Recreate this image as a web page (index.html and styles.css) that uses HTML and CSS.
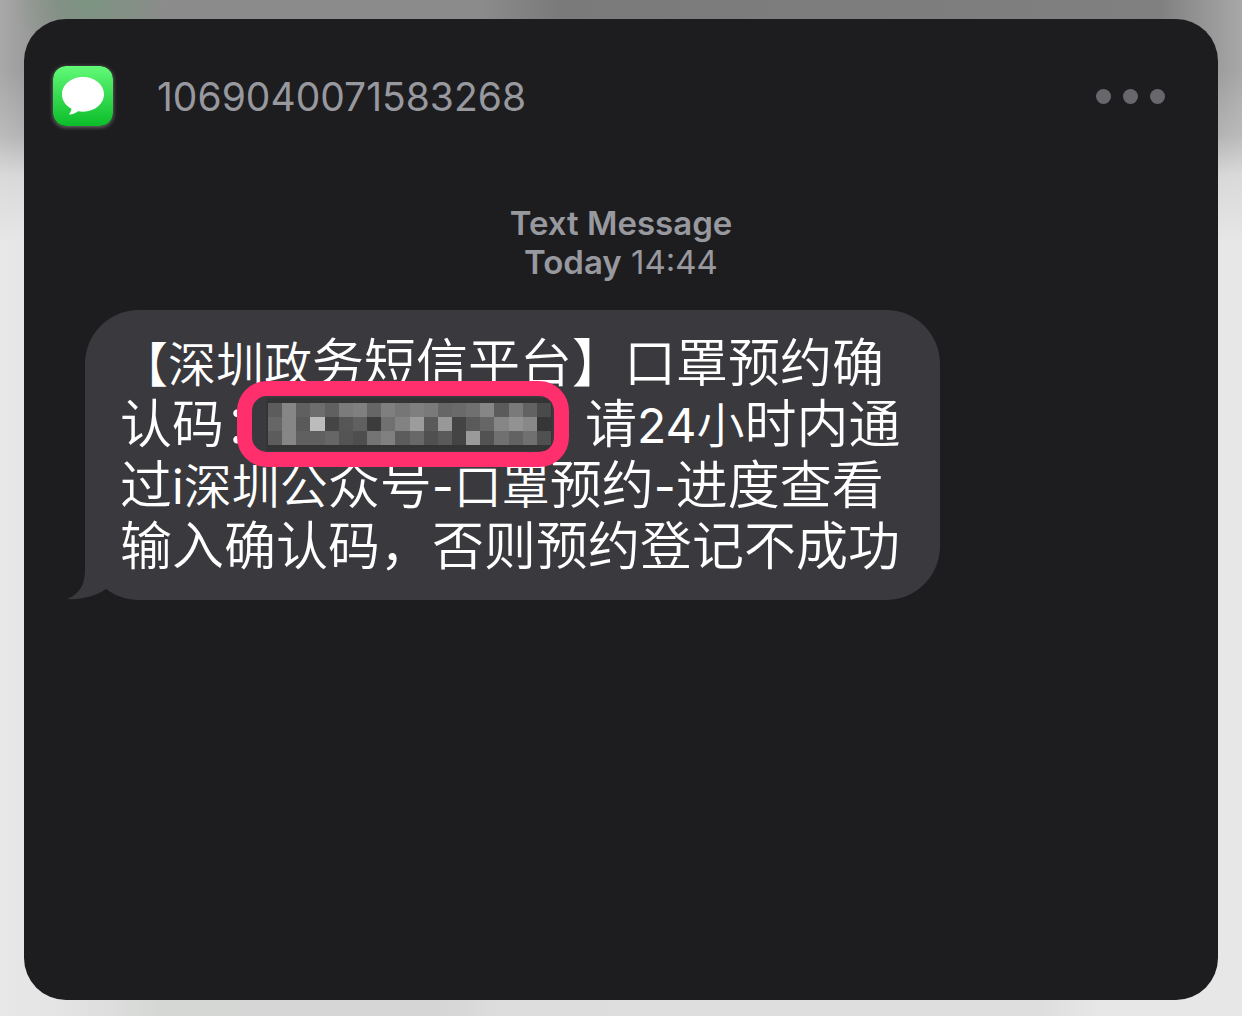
FILE: index.html
```html
<!DOCTYPE html>
<html lang="zh-CN">
<head>
<meta charset="utf-8">
<meta name="viewport" content="width=device-width, initial-scale=1">
<title>Messages</title>
<link rel="stylesheet" href="styles.css">
</head>
<body>
<main class="card">
  <header class="card-header">
    <svg class="app-icon" viewBox="0 0 60 60" aria-hidden="true">
      <defs>
        <linearGradient id="green" x1="0" y1="0" x2="0" y2="1">
          <stop offset="0" stop-color="#62fa78"/>
          <stop offset="1" stop-color="#0bbd29"/>
        </linearGradient>
      </defs>
      <rect width="60" height="60" rx="13" fill="url(#green)"/>
      <path d="M30 11C18.400 11 9 18.700 9 28.300C9 34.400 12.700 39.700 18.500 42.800C18.300 45 17.200 46.900 15.800 48.400C19.300 48.600 22.800 47.100 25 45.200C26.600 45.500 28.300 45.700 30 45.700C41.600 45.700 51 37.900 51 28.300C51 18.700 41.600 11 30 11Z" fill="#fff"/>
    </svg>
    <h1 class="sender">1069040071583268</h1>
    <button class="more" type="button" aria-label="More">
      <span class="dot"></span><span class="dot"></span><span class="dot"></span>
    </button>
  </header>
  <section class="thread">
    <p class="stamp"><b>Text Message</b><br><b>Today</b> <time>14:44</time></p>
    <div class="bubble">
      <svg class="tail" viewBox="0 0 50 60" aria-hidden="true">
        <path d="M18 0V30C18 44 13 54 0 59C14 60 29 56 39 49L50 40V0Z" fill="#3a393d"/>
      </svg>
      <p class="message"><span class="alt">【深圳政</span>务短信平台】口罩预约确<br>认码：<span class="redacted"><svg class="mosaic" viewBox="0 0 302 56" aria-hidden="true"></svg></span>请<span class="latin">24</span><span class="alt">小</span>时内通<br>过<span class="latin">i</span><span class="alt">深圳公</span>众号<span class="latin">-</span><span class="alt">口罩</span>预约<span class="latin">-</span>进度查看<br>输入确认码，否则预约登记不成功</p>
    </div>
  </section>
</main>
<script src="mosaic.js"></script>
</body>
</html>
```
FILE: styles.css
```css
* {
  box-sizing: border-box;
}

body {
  margin: 0;
  min-height: 100vh;
  display: flex;
  padding: 19px 24px 16px;
  font-family: Inter, "Noto Sans CJK SC", sans-serif;
  background:
    radial-gradient(ellipse 80px 60px at 90px 0, rgba(120, 150, 125, 0.8), transparent),
    linear-gradient(to bottom, transparent 70px, rgba(230, 230, 230, 0.3) 135px, rgba(230, 230, 230, 0.8) 175px, #e6e6e6 240px) top / 100% 240px no-repeat,
    linear-gradient(to right, #a8a8a8, #8c8c8c 60px, #8b8b8b 480px, #7a7a7a 560px, #808080 1160px, #a8a8a8) top / 100% 240px no-repeat,
    linear-gradient(to right, #e8e8e8, #e4e4e4 60px, #d5d7d5 160px, #d5d5d5 440px, #dddddd 500px, #dedede 1040px, #e7e7e7 1100px);
}

.card {
  flex: 1;
  border-radius: 42px;
  background: #1d1d1f;
}

.card-header {
  display: flex;
  align-items: center;
  padding: 46px 53px 0 29px;
}

.app-icon {
  width: 60px;
  height: 60px;
  border-radius: 13px;
  box-shadow: 0 1px 4px rgba(255, 255, 255, 0.4);
}

.sender {
  flex: 1;
  margin: 0 0 0 44px;
  padding-top: 2px;
  font-size: 39px;
  line-height: 60px;
  font-weight: 400;
  color: #98989f;
}

.more {
  display: flex;
  gap: 12px;
  padding: 0;
  border: 0;
  background: none;
}

.dot {
  width: 15px;
  height: 15px;
  border-radius: 50%;
  background: #68676c;
}

.thread {
  padding: 77px 0 0 61px;
}

.stamp {
  margin: 0 61px 0 0;
  text-align: center;
  font-size: 33px;
  line-height: 39px;
  color: #98989f;
}

.stamp b {
  font-weight: 600;
}

.bubble {
  position: relative;
  width: fit-content;
  margin-top: 28px;
  padding: 19px 39px 27px 35px;
  border-radius: 54px;
  background: #3a393d;
}

.tail {
  position: absolute;
  left: -18px;
  bottom: 0;
  width: 50px;
  height: 60px;
}

.message {
  position: relative;
  margin: 0;
  font-family: "Noto Sans CJK SC", sans-serif;
  font-size: 52px;
  font-weight: 350;
  line-height: 61px;
  white-space: nowrap;
  color: #fff;
}

.alt {
  font-size: 48px;
  line-height: 48px;
}

.latin {
  font-family: Inter, sans-serif;
  font-size: 48px;
  font-weight: 400;
  line-height: 48px;
}

.redacted {
  position: relative;
  display: inline-block;
  width: 309px;
  height: 40px;
}

.mosaic {
  position: absolute;
  left: -39px;
  top: -22px;
  width: 332px;
  height: 86px;
  border: 15px solid #ff2f6d;
  border-radius: 30px;
  background: #3a393d;
}
```
FILE: mosaic.js
```js
// Grey levels of the pixelated code, one row per line.
const rows = [
  "5c 86 60 6d 60 7b 80 66 7f 76 7f 7a 66 6a 70 86 5b 7a 62 4a",
  "66 86 5a bc 45 56 60 3c 70 82 9c 5a 98 44 5a 66 86 92 88 36",
  "5c 86 60 60 66 54 4e 74 80 5c 68 50 5a 44 9a 52 70 62 70 50",
];
const svg = document.querySelector(".mosaic");

function cell(x, y, width, height, fill) {
  const rect = document.createElementNS("http://www.w3.org/2000/svg", "rect");
  Object.entries({ x, y, width, height, fill }).forEach(([k, v]) => rect.setAttribute(k, v));
  svg.append(rect);
}

cell(14, 2, 286, 53, "#343436");
rows.forEach((row, r) => {
  row.split(" ").forEach((level, c) => {
    const x = Math.round(16 + c * 14.15);
    cell(x, 7 + r * 14, Math.round(16 + (c + 1) * 14.15) - x, 14, "#" + level.repeat(3));
  });
});
```
